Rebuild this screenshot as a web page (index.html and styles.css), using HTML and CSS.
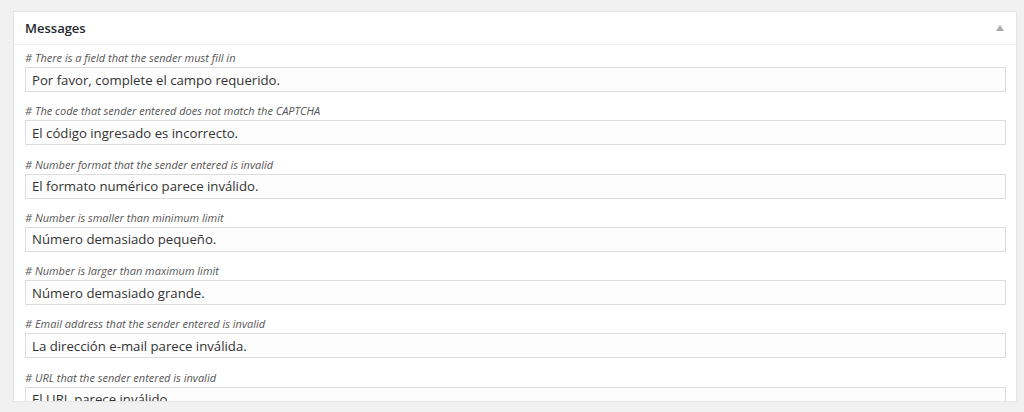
FILE: index.html
```html
<!DOCTYPE html>
<html>
<head>
  <meta charset="utf-8">
  <title>Messages</title>
  <meta name="viewport" content="width=device-width, initial-scale=1.0">
  <link rel="stylesheet" href="styles.css">
</head>
<body>
  <div class="postbox">
    <div class="postbox-header">
      <h2>Messages</h2>
      <span class="toggle-arrow"></span>
    </div>

    <div class="inside">
      <div class="message-row">
        <label for="msg-required"># There is a field that the sender must fill in</label>
        <input type="text" id="msg-required" value="Por favor, complete el campo requerido.">
      </div>

      <div class="message-row">
        <label for="msg-captcha"># The code that sender entered does not match the CAPTCHA</label>
        <input type="text" id="msg-captcha" value="El código ingresado es incorrecto.">
      </div>

      <div class="message-row">
        <label for="msg-number"># Number format that the sender entered is invalid</label>
        <input type="text" id="msg-number" value="El formato numérico parece inválido.">
      </div>

      <div class="message-row">
        <label for="msg-too-small"># Number is smaller than minimum limit</label>
        <input type="text" id="msg-too-small" value="Número demasiado pequeño.">
      </div>

      <div class="message-row">
        <label for="msg-too-large"># Number is larger than maximum limit</label>
        <input type="text" id="msg-too-large" value="Número demasiado grande.">
      </div>

      <div class="message-row">
        <label for="msg-email"># Email address that the sender entered is invalid</label>
        <input type="text" id="msg-email" value="La dirección e-mail parece inválida.">
      </div>

      <div class="message-row">
        <label for="msg-url"># URL that the sender entered is invalid</label>
        <input type="text" id="msg-url" value="El URL parece inválido.">
      </div>
    </div>
  </div>
</body>
</html>
```

FILE: styles.css
```css
body {
  margin: 0;
  padding: 11px 7px 0 13px;
  background-color: #f1f1f1;
  font-family: "Open Sans", sans-serif;
  color: #444;
}

.postbox {
  height: 389px;
  overflow: hidden;
  background-color: #fff;
  border: 1px solid #e5e5e5;
  box-shadow: 0 1px 1px rgba(0, 0, 0, 0.04);
}

.postbox-header {
  display: flex;
  align-items: center;
  justify-content: space-between;
  height: 32px;
  padding: 0 12px 0 11px;
  border-bottom: 1px solid #eee;
}

.postbox-header h2 {
  margin: 0;
  font-size: 13px;
  font-weight: 600;
  color: #23282d;
}

.toggle-arrow {
  width: 0;
  height: 0;
  border-left: 4px solid transparent;
  border-right: 4px solid transparent;
  border-bottom: 6px solid #aaa;
}

.inside {
  padding: 4px 10px 0 11px;
}

.message-row {
  margin-bottom: 10.3px;
}

label {
  display: block;
  height: 18px;
  line-height: 18px;
  font-size: 11px;
  font-style: italic;
  color: #555;
}

input[type="text"] {
  display: block;
  box-sizing: border-box;
  width: 100%;
  height: 25px;
  margin: 0;
  padding: 0 6px;
  border: 1px solid #ddd;
  background-color: #fdfdfd;
  font-family: "Open Sans", sans-serif;
  font-size: 13.2px;
  color: #333;
}
```
